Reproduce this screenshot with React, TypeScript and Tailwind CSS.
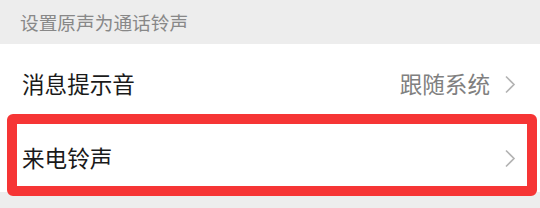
import React from 'react';

const Chevron: React.FC = () => (
  <svg width="12" height="19" viewBox="0 0 12 19" className="shrink-0">
    <path d="M2 1.5 L10 9.5 L2 17.5" fill="none" stroke="#b3b3b3" strokeWidth="1.6" />
  </svg>
);

const font = { fontFamily: '"Noto Sans CJK SC", "Noto Sans", sans-serif' };

export default function App() {
  return (
    <div className="relative w-[540px] h-[208px] bg-[#ededed] overflow-hidden" style={font}>
      <div className="h-[44px] flex items-center pl-[20px] text-[18.7px] text-[#888888]">
        设置原声为通话铃声
      </div>
      <div className="bg-white">
        <div className="h-[80px] flex items-center pl-[22px] pr-[24px]">
          <span className="flex-1 text-[22.6px] text-[#1a1a1a]">消息提示音</span>
          <span className="text-[22.6px] text-[#808080] mr-[14px]">跟随系统</span>
          <Chevron />
        </div>
        <div className="h-[68px] flex items-center pl-[22px] pr-[24px]">
          <span className="flex-1 text-[22.6px] text-[#1a1a1a]">来电铃声</span>
          <Chevron />
        </div>
      </div>
      <div className="absolute left-[7px] top-[114px] w-[530px] h-[82px] border-[10px] border-[#f63535] rounded-[6px]" />
    </div>
  );
}
